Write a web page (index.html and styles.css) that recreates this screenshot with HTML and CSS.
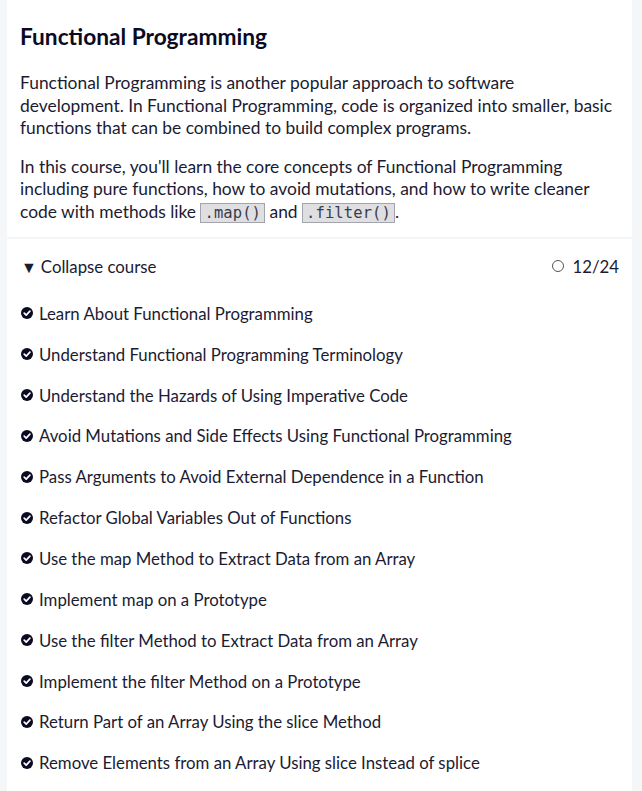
FILE: index.html
```html
<!DOCTYPE html>
<html>
<head>
<meta charset="utf-8">
<link rel="stylesheet" href="styles.css">
</head>
<body>
<div class="card">
  <section class="intro">
    <h2 class="title">Functional Programming</h2>
    <p class="desc">Functional Programming is another popular approach to software development. In Functional Programming, code is organized into smaller, basic functions that can be combined to build complex programs.</p>
    <p class="desc">In this course, you'll learn the core concepts of Functional Programming including pure functions, how to avoid mutations, and how to write cleaner code with methods like <code>.map()</code> and <code>.filter()</code>.</p>
  </section>
  <section class="course">
    <div class="toggle-row">
      <span class="toggle"><span class="caret">▼</span>Collapse course</span>
      <span class="progress"><span class="ring"></span>12/24</span>
    </div>
    <ul class="steps">
      <li><svg class="check" viewBox="0 0 12 12"><circle cx="6" cy="6" r="6" fill="#0a0a23"/><path d="M3.2 6.2 L5.2 8.1 L8.9 4.2" fill="none" stroke="#fff" stroke-width="1.7" stroke-linecap="round" stroke-linejoin="round"/></svg>Learn About Functional Programming</li>
      <li><svg class="check" viewBox="0 0 12 12"><circle cx="6" cy="6" r="6" fill="#0a0a23"/><path d="M3.2 6.2 L5.2 8.1 L8.9 4.2" fill="none" stroke="#fff" stroke-width="1.7" stroke-linecap="round" stroke-linejoin="round"/></svg>Understand Functional Programming Terminology</li>
      <li><svg class="check" viewBox="0 0 12 12"><circle cx="6" cy="6" r="6" fill="#0a0a23"/><path d="M3.2 6.2 L5.2 8.1 L8.9 4.2" fill="none" stroke="#fff" stroke-width="1.7" stroke-linecap="round" stroke-linejoin="round"/></svg>Understand the Hazards of Using Imperative Code</li>
      <li><svg class="check" viewBox="0 0 12 12"><circle cx="6" cy="6" r="6" fill="#0a0a23"/><path d="M3.2 6.2 L5.2 8.1 L8.9 4.2" fill="none" stroke="#fff" stroke-width="1.7" stroke-linecap="round" stroke-linejoin="round"/></svg>Avoid Mutations and Side Effects Using Functional Programming</li>
      <li><svg class="check" viewBox="0 0 12 12"><circle cx="6" cy="6" r="6" fill="#0a0a23"/><path d="M3.2 6.2 L5.2 8.1 L8.9 4.2" fill="none" stroke="#fff" stroke-width="1.7" stroke-linecap="round" stroke-linejoin="round"/></svg>Pass Arguments to Avoid External Dependence in a Function</li>
      <li><svg class="check" viewBox="0 0 12 12"><circle cx="6" cy="6" r="6" fill="#0a0a23"/><path d="M3.2 6.2 L5.2 8.1 L8.9 4.2" fill="none" stroke="#fff" stroke-width="1.7" stroke-linecap="round" stroke-linejoin="round"/></svg>Refactor Global Variables Out of Functions</li>
      <li><svg class="check" viewBox="0 0 12 12"><circle cx="6" cy="6" r="6" fill="#0a0a23"/><path d="M3.2 6.2 L5.2 8.1 L8.9 4.2" fill="none" stroke="#fff" stroke-width="1.7" stroke-linecap="round" stroke-linejoin="round"/></svg>Use the map Method to Extract Data from an Array</li>
      <li><svg class="check" viewBox="0 0 12 12"><circle cx="6" cy="6" r="6" fill="#0a0a23"/><path d="M3.2 6.2 L5.2 8.1 L8.9 4.2" fill="none" stroke="#fff" stroke-width="1.7" stroke-linecap="round" stroke-linejoin="round"/></svg>Implement map on a Prototype</li>
      <li><svg class="check" viewBox="0 0 12 12"><circle cx="6" cy="6" r="6" fill="#0a0a23"/><path d="M3.2 6.2 L5.2 8.1 L8.9 4.2" fill="none" stroke="#fff" stroke-width="1.7" stroke-linecap="round" stroke-linejoin="round"/></svg>Use the filter Method to Extract Data from an Array</li>
      <li><svg class="check" viewBox="0 0 12 12"><circle cx="6" cy="6" r="6" fill="#0a0a23"/><path d="M3.2 6.2 L5.2 8.1 L8.9 4.2" fill="none" stroke="#fff" stroke-width="1.7" stroke-linecap="round" stroke-linejoin="round"/></svg>Implement the filter Method on a Prototype</li>
      <li><svg class="check" viewBox="0 0 12 12"><circle cx="6" cy="6" r="6" fill="#0a0a23"/><path d="M3.2 6.2 L5.2 8.1 L8.9 4.2" fill="none" stroke="#fff" stroke-width="1.7" stroke-linecap="round" stroke-linejoin="round"/></svg>Return Part of an Array Using the slice Method</li>
      <li><svg class="check" viewBox="0 0 12 12"><circle cx="6" cy="6" r="6" fill="#0a0a23"/><path d="M3.2 6.2 L5.2 8.1 L8.9 4.2" fill="none" stroke="#fff" stroke-width="1.7" stroke-linecap="round" stroke-linejoin="round"/></svg>Remove Elements from an Array Using slice Instead of splice</li>
    </ul>
  </section>
</div>
</body>
</html>
```
FILE: styles.css
```css
html, body {
  margin: 0;
  padding: 0;
  background: #f5f6f7;
  height: 100%;
}
body {
  font-family: Lato, "Open Sans", sans-serif;
  color: #1b1b32;
}
.card {
  margin: 0 10px 0 7px;
  display: flex;
  flex-direction: column;
  gap: 2px;
  min-height: 100%;
}
.intro {
  background: #fff;
  padding: 22px 13px 14px 13px;
}
.title {
  font-size: 22.7px;
  font-weight: 700;
  margin: 0 0 20px;
  line-height: 30px;
  color: #0a0a23;
}
.desc {
  font-size: 17.4px;
  line-height: 22.5px;
  margin: 0 0 16px;
}
.desc:last-child {
  margin-bottom: 0;
}
code {
  font-family: "DejaVu Sans Mono", "Liberation Mono", monospace;
  font-size: 15.5px;
  line-height: 20px;
  letter-spacing: 0.1px;
  background: #dfdfe2;
  border: 1px solid #a4a4ad;
  padding: 0 3px;
  color: #3b3b4f;
}
.course {
  flex: 1;
  background: #fff;
  padding: 16px 13px 0 14px;
}
.toggle-row {
  display: flex;
  justify-content: space-between;
  align-items: center;
  font-size: 16.8px;
  height: 22px;
}
.caret {
  font-size: 16px;
  margin-right: 4px;
}
.progress {
  display: flex;
  align-items: center;
  gap: 8px;
}
.ring {
  width: 12px;
  height: 12px;
  border: 1px solid #555;
  border-radius: 50%;
  box-sizing: border-box;
}
.steps {
  list-style: none;
  margin: 16px 0 0;
  padding: 0;
}
.steps li {
  display: flex;
  align-items: center;
  gap: 6px;
  font-size: 16.8px;
  height: 40.85px;
}
.check {
  width: 12px;
  height: 12px;
  flex: none;
}
```
